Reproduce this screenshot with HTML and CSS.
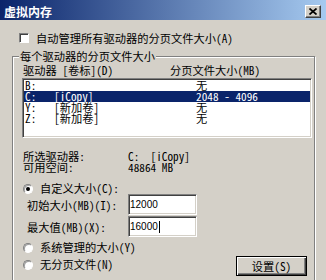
FILE: index.html
```html
<!DOCTYPE html>
<html lang="zh-CN">
<head>
    <meta charset="UTF-8">
    <meta name="viewport" content="width=device-width, initial-scale=1.0">
    <title>虚拟内存</title>
    <link rel="stylesheet" href="styles.css">
</head>
<body>
    <div class="titlebar">
        <span class="title">虚拟内存</span>
        <span class="close">
            <svg width="8" height="7" viewBox="0 0 8 7"><path d="M0.5 0.5L7.5 6.5M7.5 0.5L0.5 6.5" stroke="#000" stroke-width="1.7"/></svg>
        </span>
    </div>

    <div class="check-row">
        <span class="checkbox"></span>
        <span>自动管理所有驱动器的分页文件大小(A)</span>
    </div>

    <div class="group">
        <div class="group-title">每个驱动器的分页文件大小</div>
        <div class="list-head">
            <span class="col-drive">驱动器 [卷标](D)</span>
            <span>分页文件大小(MB)</span>
        </div>
        <div class="listbox">
            <div class="item"><span class="c1">B:</span><span class="c2"></span><span>无</span></div>
            <div class="item selected"><span class="c1">C:</span><span class="c2">[iCopy]</span><span>2048 - 4096</span></div>
            <div class="item"><span class="c1">Y:</span><span class="c2">[新加卷]</span><span>无</span></div>
            <div class="item"><span class="c1">Z:</span><span class="c2">[新加卷]</span><span>无</span></div>
        </div>

        <div class="info">
            <div class="info-row"><span class="info-label">所选驱动器:</span><span class="value">C:  [iCopy]</span></div>
            <div class="info-row"><span class="info-label">可用空间:</span><span class="value">48864 MB</span></div>
        </div>

        <div class="radio-row first">
            <span class="radio checked"></span>
            <span>自定义大小(C):</span>
        </div>
        <div class="field-row">
            <span class="field-label">初始大小(MB)(I):</span>
            <span class="input">12000</span>
        </div>
        <div class="field-row second">
            <span class="field-label">最大值(MB)(X):</span>
            <span class="input">16000<span class="caret"></span></span>
        </div>

        <div class="bottom">
            <div class="radios">
                <div class="radio-row">
                    <span class="radio"></span>
                    <span>系统管理的大小(Y)</span>
                </div>
                <div class="radio-row">
                    <span class="radio"></span>
                    <span>无分页文件(N)</span>
                </div>
            </div>
            <div class="button">设置(S)</div>
        </div>
    </div>
</body>
</html>
```

FILE: styles.css
```css
body {
    margin: 0;
    width: 326px;
    height: 280px;
    overflow: hidden;
    background: #d4d0c8;
    font-family: "Noto Sans Mono CJK SC", "Noto Sans CJK SC", sans-serif;
    font-size: 11.25px;
    color: #000;
}
.titlebar {
    height: 20px;
    box-sizing: border-box;
    padding: 3px 5px 0 4px;
    display: flex;
    align-items: center;
    background: linear-gradient(90deg, #0a246a 0%, #a6caf0 100%);
}
.title {
    color: #fff;
    font-family: "Noto Sans CJK SC", sans-serif;
    font-weight: bold;
    font-size: 12px;
    line-height: 12px;
}
.close {
    margin-left: auto;
    width: 16px;
    height: 13px;
    box-sizing: border-box;
    background: #d4d0c8;
    border: 1px solid;
    border-color: #fff #404040 #404040 #fff;
    box-shadow: inset -1px -1px 0 #808080;
    display: flex;
    align-items: center;
    justify-content: center;
}
.check-row {
    display: flex;
    align-items: center;
    height: 12px;
    line-height: 12px;
    margin: 12px 0 0 19px;
}
.checkbox {
    width: 10px;
    height: 10px;
    box-sizing: border-box;
    margin-right: 7px;
    background: #fff;
    border: 1px solid;
    border-color: #808080 #fff #fff #808080;
    box-shadow: inset 1px 1px 0 #404040;
}
.group {
    margin: 12px 0 0 12px;
    width: 303px;
    box-sizing: border-box;
    border: 1px solid #808080;
    box-shadow: inset 1px 1px 0 #fff, 1px 1px 0 #fff;
    padding: 0 2px 30px 9px;
}
.group-title {
    width: fit-content;
    margin: -7px 0 0 -3px;
    padding: 0 1px;
    background: #d4d0c8;
    line-height: 12px;
}
.list-head {
    display: flex;
    margin-top: 2px;
    line-height: 12px;
}
.col-drive {
    width: 148px;
    padding-left: 1px;
    box-sizing: border-box;
}
.listbox {
    margin-top: 2px;
    height: 60px;
    box-sizing: border-box;
    padding: 1px;
    background: #fff;
    border: 1px solid;
    border-color: #808080 #fff #fff #808080;
    box-shadow: inset 1px 1px 0 #404040, inset -1px -1px 0 #d4d0c8;
}
.item {
    display: flex;
    height: 11px;
    line-height: 11px;
    padding-left: 1px;
    white-space: pre;
}
.item.selected {
    background: #0a246a;
    color: #fff;
}
.c1 {
    width: 29px;
}
.c2 {
    width: 142px;
}
.info {
    margin-top: 13px;
}
.info-row {
    display: flex;
    line-height: 11px;
}
.info-label {
    width: 106px;
    padding-left: 1px;
    box-sizing: border-box;
}
.value {
    white-space: pre;
}
.radio-row {
    display: flex;
    align-items: center;
    height: 11px;
    line-height: 11px;
}
.radio-row.first {
    margin-top: 10px;
}
.radio {
    position: relative;
    width: 10px;
    height: 10px;
    box-sizing: border-box;
    margin: 0 7px 0 1px;
    border-radius: 50%;
    background: #fff;
    border: 1px solid;
    border-color: #808080 #fff #fff #808080;
    box-shadow: inset 1px 1px 0 #a0a0a0;
}
.radio.checked::after {
    content: "";
    position: absolute;
    left: 2px;
    top: 2px;
    width: 4px;
    height: 4px;
    border-radius: 50%;
    background: #000;
}
.field-row {
    display: flex;
    align-items: center;
    height: 21px;
}
.field-row.second {
    margin-top: 1px;
}
.field-label {
    width: 106px;
    padding-left: 5px;
    box-sizing: border-box;
}
.input {
    display: flex;
    align-items: center;
    width: 69px;
    height: 21px;
    box-sizing: border-box;
    padding-left: 1px;
    background: #fff;
    border: 1px solid;
    border-color: #808080 #fff #fff #808080;
    box-shadow: inset 1px 1px 0 #404040, inset -1px -1px 0 #d4d0c8;
    font-family: "Liberation Sans", Arial, sans-serif;
    font-size: 10px;
}
.caret {
    width: 1px;
    height: 12px;
    margin-left: 1px;
    background: #000;
}
.bottom {
    display: flex;
    margin-top: 5px;
}
.radios {
    display: flex;
    flex-direction: column;
    gap: 6px;
}
.button {
    margin: 14px 5px 0 auto;
    width: 71px;
    height: 20px;
    box-sizing: border-box;
    border: 1px solid #000;
    box-shadow: inset 1px 1px 0 #fff, inset -1px -1px 0 #404040, inset -2px -2px 0 #808080;
    display: flex;
    align-items: center;
    justify-content: center;
}
```
